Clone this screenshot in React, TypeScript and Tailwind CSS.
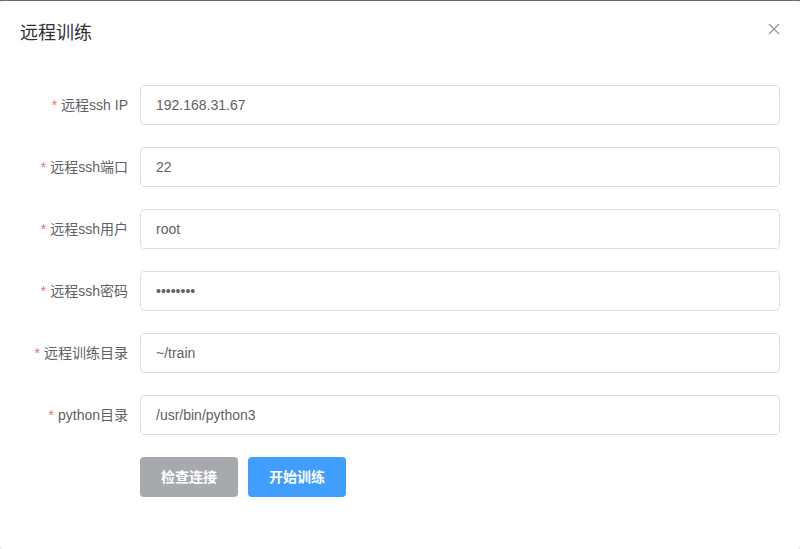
import { useState } from 'react'

type Field = { key: string; label: string; value: string; type?: string }

const FIELDS: Field[] = [
  { key: 'host', label: '远程ssh IP', value: '192.168.31.67' },
  { key: 'port', label: '远程ssh端口', value: '22' },
  { key: 'user', label: '远程ssh用户', value: 'root' },
  { key: 'password', label: '远程ssh密码', value: '12345678', type: 'password' },
  { key: 'workdir', label: '远程训练目录', value: '~/train' },
  { key: 'python', label: 'python目录', value: '/usr/bin/python3' },
]

function FormRow({ field, onChange }: { field: Field; onChange: (v: string) => void }) {
  return (
    <div className="mb-[22px] flex items-center">
      <label className="w-[120px] shrink-0 pr-3 text-right text-[14px] leading-10 text-[#606266]">
        <span className="mr-1 text-[#f56c6c]">*</span>
        {field.label}
      </label>
      <input
        type={field.type ?? 'text'}
        value={field.value}
        onChange={(e) => onChange(e.target.value)}
        className="h-10 flex-1 rounded-[4px] border border-[#dcdfe6] bg-white px-[15px] text-[14px] text-[#606266] outline-none focus:border-[#409eff]"
      />
    </div>
  )
}

export default function App() {
  const [form, setForm] = useState(FIELDS)
  const update = (key: string, v: string) => setForm((f) => f.map((x) => (x.key === key ? { ...x, value: v } : x)))

  return (
    <div className="h-[549px] w-[800px] border-t border-[#6b6b6b] bg-[#e8e8e8] font-['Liberation_Sans','Noto_Sans_CJK_SC',sans-serif]">
      <div className="h-[548px] rounded-[4px] bg-white">
        {/* header */}
        <div className="flex items-start justify-between px-5 pb-[10px] pt-5">
          <span className="text-[18px] leading-6 text-[#303133]">远程训练</span>
          <button type="button" className="mt-[2px] text-[#909399]" aria-label="close">
            <svg width="12" height="12" viewBox="0 0 12 12" fill="none" stroke="currentColor" strokeWidth="1.2">
              <path d="M1 1 L11 11 M11 1 L1 11" />
            </svg>
          </button>
        </div>

        {/* body */}
        <div className="px-5 py-[30px]">
          {form.map((f) => (
            <FormRow key={f.key} field={f} onChange={(v) => update(f.key, v)} />
          ))}
          <div className="flex gap-[10px] pl-[120px]">
            <button type="button" className="h-10 w-[98px] rounded-[4px] bg-[#a6a9ad] text-[14px] font-bold text-white">
              检查连接
            </button>
            <button type="button" className="h-10 w-[98px] rounded-[4px] bg-[#409eff] text-[14px] font-bold text-white">
              开始训练
            </button>
          </div>
        </div>
      </div>
    </div>
  )
}
